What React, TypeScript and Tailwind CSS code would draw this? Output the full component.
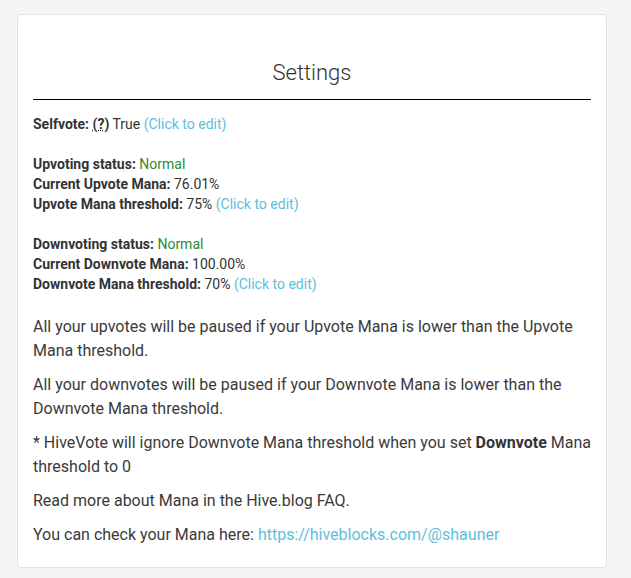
const font = { fontFamily: "Roboto, 'Liberation Sans', sans-serif" };

function Edit() {
  return <span className="text-[#5bc0de]">(Click to edit)</span>;
}

export default function App() {
  return (
    <div className="min-h-[578px] w-[631px] bg-[#f5f5f7] pt-[14px] pl-[17px] text-[#333]" style={font}>
      <div className="w-[590px] rounded-[4px] border border-[#e3e3e6] bg-white px-[15px] pt-[43px] pb-[20px]">
        <h2 className="border-b border-black pb-[11px] text-center text-[22px] font-light leading-[30px] text-[#333]">
          Settings
        </h2>

        <div className="mt-[14px] text-[14px] leading-[20px]">
          <div>
            <b>Selfvote:</b>{" "}
            <abbr className="cursor-help font-bold underline decoration-dotted">(?)</abbr> True <Edit />
          </div>

          <div className="mt-5">
            <div>
              <b>Upvoting status:</b> <span className="text-[#2e8b2e]">Normal</span>
            </div>
            <div>
              <b>Current Upvote Mana:</b> 76.01%
            </div>
            <div>
              <b>Upvote Mana threshold:</b> 75% <Edit />
            </div>
          </div>

          <div className="mt-5">
            <div>
              <b>Downvoting status:</b> <span className="text-[#2e8b2e]">Normal</span>
            </div>
            <div>
              <b>Current Downvote Mana:</b> 100.00%
            </div>
            <div>
              <b>Downvote Mana threshold:</b> 70% <Edit />
            </div>
          </div>
        </div>

        <div className="mt-[21px] flex flex-col gap-[10px] text-[16px] leading-[24px] text-[#3a3a3a]">
          <p>All your upvotes will be paused if your Upvote Mana is lower than the Upvote Mana threshold.</p>
          <p>All your downvotes will be paused if your Downvote Mana is lower than the Downvote Mana threshold.</p>
          <p>
            * HiveVote will ignore Downvote Mana threshold when you set <b className="font-bold text-[#333]">Downvote</b>{" "}
            Mana threshold to 0
          </p>
          <p>Read more about Mana in the Hive.blog FAQ.</p>
          <p>
            You can check your Mana here:{" "}
            <a href="#" className="text-[#5bc0de]">
              https://hiveblocks.com/@shauner
            </a>
          </p>
        </div>
      </div>
    </div>
  );
}
